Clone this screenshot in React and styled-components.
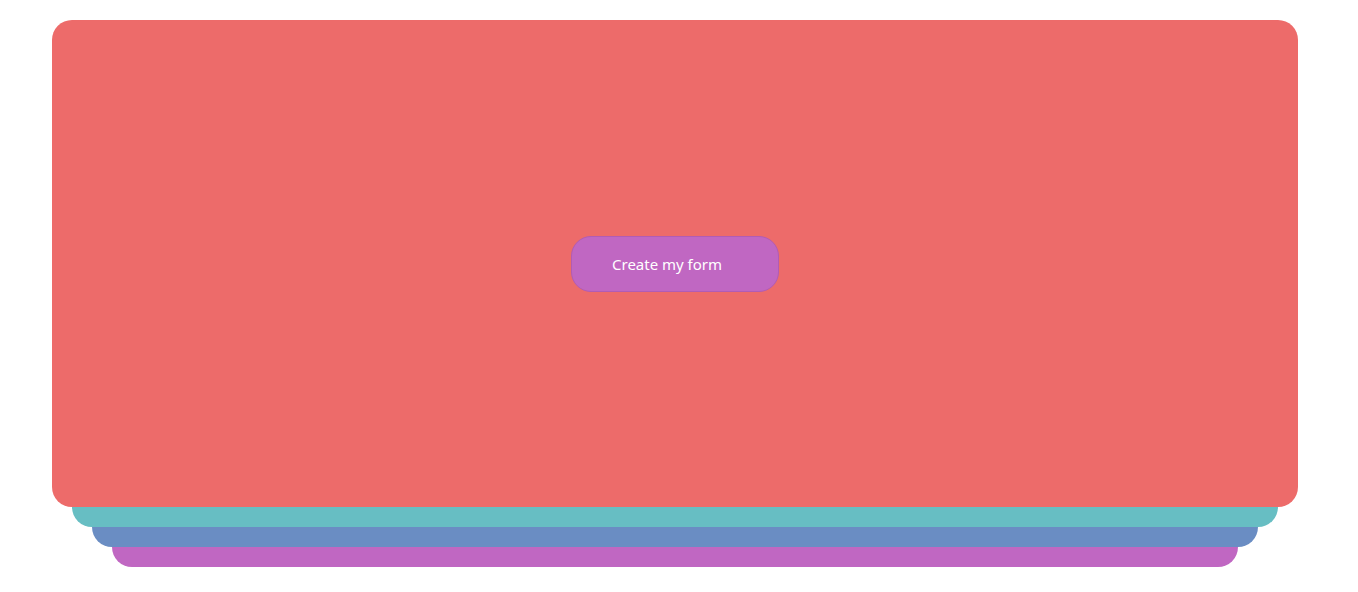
import React from 'react'
import styled, { createGlobalStyle } from 'styled-components'

const layers = [
  { color: '#67bec3', inset: 20 },
  { color: '#6a8dc3', inset: 40 },
  { color: '#c067c2', inset: 60 },
]

const App = () => {
  return (
    <>
      <Global />
      <Page>
        <Stack>
          <Card>
            <Btn type="button">Create my form</Btn>
          </Card>
          {layers.map((layer, i) => (
            <Layer key={layer.color} color={layer.color} inset={layer.inset} depth={i} />
          ))}
        </Stack>
      </Page>
    </>
  )
}

export default App

const Global = createGlobalStyle`
  body {
    margin: 0;
    background: #fff;
    font-family: "Noto Sans", "Open Sans", sans-serif;
  }
`
const Page = styled.div`
  padding: 20px 0 25px 52px;
`
const Stack = styled.div`
  width: 1246px;
  display: flex;
  flex-direction: column;
`
const Card = styled.div`
  position: relative;
  z-index: 10;
  height: 487px;
  background: #ed6b6a;
  border-radius: 20px;
  display: flex;
  align-items: center;
  justify-content: center;
`
const Layer = styled.div`
  position: relative;
  z-index: ${p => 9 - p.depth};
  height: 40px;
  margin: -20px ${p => p.inset}px 0;
  background: ${p => p.color};
  border-radius: 0 0 20px 20px;
`
const Btn = styled.button`
  width: 208px;
  height: 56px;
  padding: 0 0 0 40px;
  text-align: left;
  background: #c067c2;
  border: 1px solid #b15cb4;
  border-radius: 20px;
  color: #fff;
  font-family: "Noto Sans", "Open Sans", sans-serif;
  font-size: 15px;
  cursor: pointer;
`
